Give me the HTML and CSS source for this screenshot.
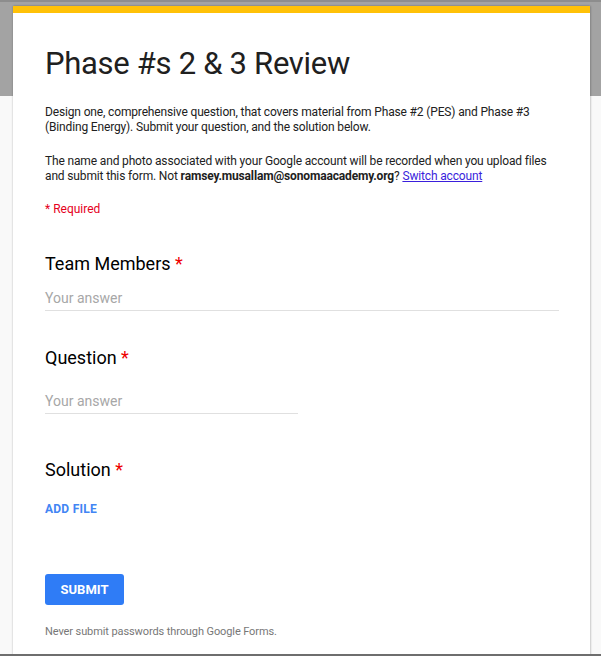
FILE: index.html
```html
<!DOCTYPE html>
<html lang="en">
<head>
<meta charset="utf-8">
<title>Phase #s 2 &amp; 3 Review</title>
<link rel="stylesheet" href="styles.css">
</head>
<body>
<div class="page">
  <form class="card">
    <h1 class="title">Phase #s 2 &amp; 3 Review</h1>
    <p class="desc">Design one, comprehensive question, that covers material from Phase #2 (PES) and Phase #3 (Binding Energy). Submit your question, and the solution below.</p>
    <p class="desc notice">The name and photo associated with your Google account will be recorded when you upload files and submit this form. Not <b>ramsey.musallam@sonomaacademy.org</b>? <a href="#" class="switch">Switch account</a></p>
    <p class="required-note">* Required</p>

    <div class="item item-first">
      <div class="label">Team Members <span class="star">*</span></div>
      <div class="answer answer-wide">Your answer</div>
    </div>

    <div class="item item-question">
      <div class="label">Question <span class="star">*</span></div>
      <div class="answer answer-half">Your answer</div>
    </div>

    <div class="item item-solution">
      <div class="label">Solution <span class="star">*</span></div>
      <div class="add-file">ADD FILE</div>
    </div>

    <button type="button" class="submit">SUBMIT</button>
    <p class="footer">Never submit passwords through Google Forms.</p>
  </form>
</div>
</body>
</html>
```

FILE: styles.css
```css
* { box-sizing: border-box; }

html, body {
  margin: 0;
  padding: 0;
}

body {
  font-family: Roboto, "Liberation Sans", Arial, sans-serif;
  color: #212121;
}

.page {
  height: 656px;
  overflow: hidden;
  border-bottom: 2px solid #6e6e6e;
  background: linear-gradient(#8d8d8d 0 2px, #a3a3a3 2px 96px, #f9f9f9 96px);
  padding-top: 6px;
}

.card {
  margin-left: 13px;
  width: 577px;
  min-height: 700px;
  background: #fff;
  border-top: 7px solid #ffc107;
  box-shadow: 0 0 2px rgba(0, 0, 0, 0.25), 1px 0 2px rgba(0, 0, 0, 0.1);
  padding: 0 32px;
  display: flex;
  flex-direction: column;
  align-items: flex-start;
}

.title {
  margin: 31px 0 0;
  font-size: 31px;
  line-height: 40px;
  letter-spacing: -0.3px;
  font-weight: 400;
  color: #202020;
}

.desc {
  margin: 21px 0 0;
  font-size: 12px;
  line-height: 15px;
  letter-spacing: -0.15px;
  color: #212121;
}

.desc b,
.desc a {
  line-height: 1;
}

.notice { margin-top: 19px; }

.notice b { font-weight: 700; }

.switch {
  color: #3a1fdc;
  text-decoration: underline;
}

.required-note {
  margin: 18px 0 0;
  font-size: 12px;
  line-height: 15px;
  color: #e5001c;
}

.item {
  display: flex;
  flex-direction: column;
  align-self: stretch;
  align-items: flex-start;
}

.item-first { margin-top: 35px; }
.item-question { margin-top: 35px; }
.item-solution { margin-top: 44px; }

.label {
  font-size: 18px;
  line-height: 24px;
  color: #000;
}

.star { color: #e00; }

.answer {
  font-size: 14px;
  line-height: 20px;
  color: #a7a7a7;
  padding-bottom: 2px;
  border-bottom: 1px solid #e0e0e0;
}

.item-first .answer { margin-top: 12px; }
.item-question .answer { margin-top: 21px; }

.answer-wide { align-self: stretch; margin-right: -1px; }
.answer-half { width: 253px; }

.add-file {
  margin-top: 19px;
  font-size: 12px;
  line-height: 16px;
  letter-spacing: 0.25px;
  font-weight: 700;
  color: #4285f4;
}

.submit {
  margin-top: 57px;
  width: 79px;
  height: 31px;
  border: 0;
  border-radius: 3px;
  background: #2f7cf6;
  color: #fff;
  font-family: inherit;
  font-size: 13px;
  font-weight: 700;
  padding: 0;
}

.footer {
  margin: 20px 0 0;
  font-size: 11px;
  line-height: 14px;
  letter-spacing: -0.1px;
  color: #777;
}
```
